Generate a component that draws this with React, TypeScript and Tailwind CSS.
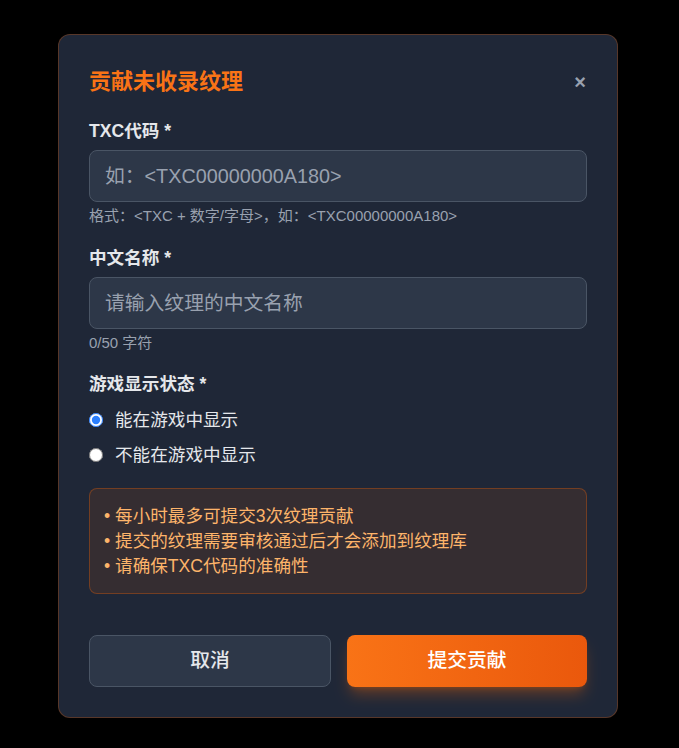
export default function App() {
  return (
    <div
      className="flex min-h-[748px] w-full items-start justify-center bg-black pt-[34px] pr-[3px]"
      style={{ fontFamily: '"Liberation Sans", "Noto Sans CJK SC", sans-serif' }}
    >
      <div className="w-[560px] rounded-xl border border-orange-500/25 bg-[#1f2737] px-[30px] pt-[32px] pb-[30px]">
        {/* header */}
        <div className="flex h-[30px] items-center justify-between">
          <h2 className="text-[22px] font-bold leading-[30px] text-[#f97316]">贡献未收录纹理</h2>
          <button className="mr-[1px] text-xl font-bold leading-none text-gray-400">×</button>
        </div>

        {/* TXC code */}
        <div className="mt-[22px]">
          <label className="block text-[17.6px] font-semibold leading-[24px] text-gray-200">TXC代码 *</label>
          <input
            className="mt-[7px] h-[52px] w-full rounded-lg border border-gray-600 bg-[#2d3748] px-[15px] text-[19.8px] text-gray-200 placeholder-gray-400 outline-none"
            placeholder="如：<TXC00000000A180>"
          />
          <p className="mt-[4px] text-[15px] leading-[20px] text-gray-400">格式：&lt;TXC + 数字/字母&gt;，如：&lt;TXC00000000A180&gt;</p>
        </div>

        {/* Chinese name */}
        <div className="mt-[20px]">
          <label className="block text-[17.6px] font-semibold leading-[24px] text-gray-200">中文名称 *</label>
          <input
            className="mt-[7px] h-[52px] w-full rounded-lg border border-gray-600 bg-[#2d3748] px-[15px] text-[19.8px] text-gray-200 placeholder-gray-400 outline-none"
            placeholder="请输入纹理的中文名称"
          />
          <p className="mt-[4px] text-[15px] leading-[20px] text-gray-400">0/50 字符</p>
        </div>

        {/* Display state */}
        <div className="mt-[19px]">
          <label className="block text-[17.6px] font-semibold leading-[24px] text-gray-200">游戏显示状态 *</label>
          <div className="mt-[12px] flex flex-col gap-[11px]">
            <label className="flex h-[24px] items-center gap-[12px] text-[17.6px] text-gray-200">
              <input type="radio" name="show" defaultChecked className="h-[14px] w-[14px] accent-blue-500" />
              能在游戏中显示
            </label>
            <label className="flex h-[24px] items-center gap-[12px] text-[17.6px] text-gray-200">
              <input type="radio" name="show" className="h-[14px] w-[14px]" />
              不能在游戏中显示
            </label>
          </div>
        </div>

        {/* notice */}
        <div className="mt-[21px] rounded-lg border border-orange-500/30 bg-orange-500/10 px-[14px] pt-[15px] pb-[14px] text-[17.6px] leading-[25px] text-[#fdb46a]">
          <p>• 每小时最多可提交3次纹理贡献</p>
          <p>• 提交的纹理需要审核通过后才会添加到纹理库</p>
          <p>• 请确保TXC代码的准确性</p>
        </div>

        {/* buttons */}
        <div className="mt-[41px] flex gap-4">
          <button className="h-[52px] flex-1 rounded-lg border border-gray-600 bg-[#2d3748] text-[19.8px] font-medium text-gray-200">
            取消
          </button>
          <button className="h-[52px] flex-1 rounded-lg bg-gradient-to-r from-[#f97316] to-[#ea580c] text-[19.8px] font-medium text-white shadow-lg shadow-orange-500/30">
            提交贡献
          </button>
        </div>
      </div>
    </div>
  );
}
